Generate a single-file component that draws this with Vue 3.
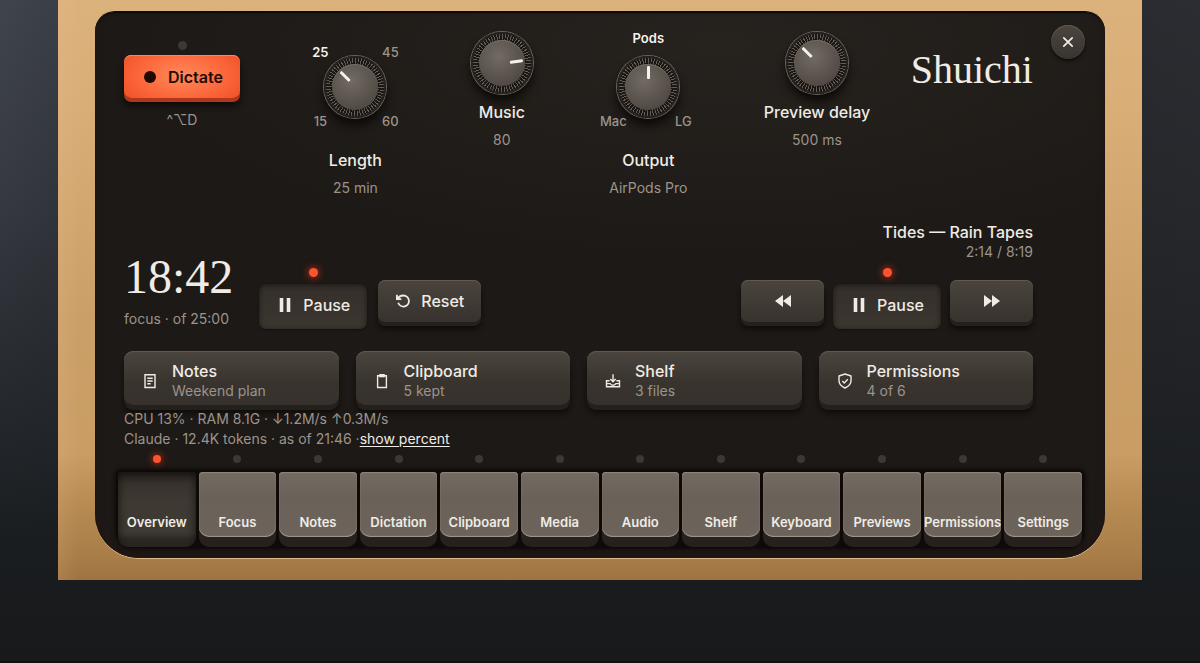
<script setup>
import { ref } from 'vue'

const dials = [
  { id: 'length', label: 'Length', value: '25 min', angle: -45, pos: 33, marks: [
    { text: '25', x: -35, y: -35, on: true }, { text: '45', x: 35, y: -35 },
    { text: '15', x: -35, y: 34 }, { text: '60', x: 35, y: 34 } ] },
  { id: 'music', label: 'Music', value: '80', angle: 82, pos: 80 },
  { id: 'output', label: 'Output', value: 'AirPods Pro', angle: 0, pos: 50, marks: [
    { text: 'Pods', x: 0, y: -49, on: true },
    { text: 'Mac', x: -35, y: 34 }, { text: 'LG', x: 35, y: 34 } ] },
  { id: 'delay', label: 'Preview delay', value: '500 ms', angle: -45, pos: 33 }
]

const cards = [
  { icon: 'notes', title: 'Notes', sub: 'Weekend plan' },
  { icon: 'clipboard', title: 'Clipboard', sub: '5 kept' },
  { icon: 'shelf', title: 'Shelf', sub: '3 files' },
  { icon: 'shield', title: 'Permissions', sub: '4 of 6' }
]

const tabs = ['Overview', 'Focus', 'Notes', 'Dictation', 'Clipboard', 'Media', 'Audio', 'Shelf', 'Keyboard', 'Previews', 'Permissions', 'Settings']
const active = ref('Overview')
</script>

<template>
  <div class="desk">
    <div class="wood">
      <main class="panel">
        <button class="close" type="button" aria-label="Close">
          <svg viewBox="0 0 12 12" width="12" height="12"><path d="M1.800 1.800 10.200 10.200M10.200 1.800 1.800 10.200" fill="none" stroke="#f3eee8" stroke-width="1.7" stroke-linecap="round" /></svg>
        </button>

        <div class="content">
          <header class="top">
            <div class="dictate-col">
              <button class="dictate" type="button">
                <i class="lamp"></i>
                <i class="rec"></i>Dictate
              </button>
              <span class="muted">^⌥D</span>
            </div>

            <div v-for="d in dials" :key="d.id" class="dial" :class="{ marked: d.marks }">
              <div class="dial-face">
                <div class="knob">
                  <input :id="d.id" type="range" min="0" max="100" :value="d.pos" />
                  <i class="needle" :style="{ transform: `rotate(${d.angle}deg)` }"></i>
                </div>
                <span
                  v-for="m in d.marks" :key="m.text" class="mark" :class="{ on: m.on }"
                  :style="{ transform: `translate(calc(-50% + ${m.x}px), calc(-50% + ${m.y}px))` }"
                >{{ m.text }}</span>
              </div>
              <label class="label" :for="d.id">{{ d.label }}</label>
              <span class="muted">{{ d.value }}</span>
            </div>

            <h1 class="brand">Shuichi</h1>
          </header>

          <section class="players">
            <div class="timer">
              <div class="clock">
                <span class="time">18:42</span>
                <span class="muted">focus · of 25:00</span>
              </div>
              <div class="row timer-row">
                <button class="btn pressed" type="button">
                  <i class="lamp lit"></i>
                  <svg viewBox="0 0 12 14" width="12" height="14"><path d="M1 0h3v14H1zM8 0h3v14H8z" fill="#f0ebe5" stroke="#f0ebe5" stroke-width=".6" /></svg>Pause
                </button>
                <button class="btn reset" type="button">
                  <svg viewBox="0 0 16 16" width="16" height="16"><path d="M1.900 1.800V6.200H6.300M2.500 5.900 C3.600 3.700 5.800 2.500 8.400 2.500 A5.500 5.500 0 1 1 3.200 9.800" fill="none" stroke="#f0ebe5" stroke-width="1.8" /></svg>Reset
                </button>
              </div>
            </div>

            <div class="media">
              <div class="track">
                <span class="label">Tides — Rain Tapes</span>
                <span class="muted">2:14 / 8:19</span>
              </div>
              <div class="row">
                <button class="btn skip" type="button" aria-label="Previous">
                  <svg viewBox="0 0 16 12" width="16" height="12"><path d="M8 0v12L0 6zM16 0v12L8 6z" fill="#f0ebe5" /></svg>
                </button>
                <button class="btn pressed" type="button">
                  <i class="lamp lit"></i>
                  <svg viewBox="0 0 12 14" width="12" height="14"><path d="M1 0h3v14H1zM8 0h3v14H8z" fill="#f0ebe5" stroke="#f0ebe5" stroke-width=".6" /></svg>Pause
                </button>
                <button class="btn skip" type="button" aria-label="Next">
                  <svg viewBox="0 0 16 12" width="16" height="12"><path d="M0 0v12l8-6zM8 0v12l8-6z" fill="#f0ebe5" /></svg>
                </button>
              </div>
            </div>
          </section>

          <section class="cards">
            <button v-for="c in cards" :key="c.icon" class="card" type="button">
              <svg viewBox="0 0 16 16" width="16" height="16" fill="none" stroke="#f0ebe5" stroke-width="1.4">
                <template v-if="c.icon === 'notes'">
                  <path d="M3 1.700h10v12.800H3z" /><path d="M5.300 5.200h5.400M5.300 8h5.400M5.300 10.800h3.400" />
                </template>
                <template v-else-if="c.icon === 'clipboard'">
                  <path d="M3.600 2.800h8.800v11.700H3.600z" /><path d="M5.200 1h5.600v3.300H5.200z" fill="#f0ebe5" stroke="none" />
                </template>
                <template v-else-if="c.icon === 'shelf'">
                  <path d="M8 1.200v7.200M5.300 6 8 8.700 10.700 6M4.600 7.800H1.500v6h13v-6h-3.100M1.500 10.600h3.600c.5 1.200 1.500 1.700 2.900 1.700s2.400-.5 2.900-1.700h3.600" />
                </template>
                <template v-else>
                  <path d="M8 1 14 3v4.800c0 3.200-2.300 5.600-6 7.200-3.700-1.600-6-4-6-7.200V3z" stroke-linejoin="round" /><path d="m5.300 8 2 2 3.500-3.700" />
                </template>
              </svg>
              <span class="card-text">
                <span class="label">{{ c.title }}</span>
                <span class="muted">{{ c.sub }}</span>
              </span>
            </button>
          </section>

          <footer class="status">
            <span>CPU 13% · RAM 8.1G · ↓1.2M/s ↑0.3M/s</span>
            <span>Claude · 12.4K tokens · as of 21:46 ·<a href="#percent">show percent</a></span>
          </footer>
        </div>

        <nav class="keybed" aria-label="Sections">
          <button v-for="t in tabs" :key="t" class="key" :class="{ down: t === active }" type="button" @click="active = t">
            <i class="lamp small" :class="{ lit: t === active }"></i>
            <span class="cap">{{ t }}</span>
          </button>
        </nav>
      </main>
    </div>
  </div>
</template>

<style>
body { background: #17191b; }
</style>

<style scoped>
.desk {
  box-sizing: border-box;
  min-height: 100vh;
  padding: 0 58px;
  border-bottom: 2px solid #150e0f;
  background:
    linear-gradient(180deg, transparent 0%, rgba(23, 25, 27, 0.25) 30%, #1a1d20 82%, #18191b 100%),
    linear-gradient(90deg, #40444d 0%, #363a42 8%, #2a2b30 92%, #2c2d32 100%);
  font-family: Inter, "Liberation Sans", sans-serif;
  font-size: 16px;
  line-height: 20px;
  color: #f0ebe5;
}
button {
  border: 0;
  margin: 0;
  padding: 0;
  font: inherit;
  color: inherit;
  cursor: pointer;
}
.wood {
  padding: 12px 37px 22px;
  background:
    linear-gradient(90deg, rgba(240, 190, 160, 0.15) 0, transparent 20px),
    linear-gradient(180deg, #dcb27c 0%, #d9ae77 18%, #cba068 55%, #c99d64 78%, #b98d54 86%, #a87d48 96%, #a07340 100%);
}
.panel {
  position: relative;
  padding: 20px 0 10px;
  border-radius: 20px 20px 44px 44px;
  background: radial-gradient(ellipse 60% 40% at 62% 6%, #26221e 0%, #1d1916 100%);
  box-shadow: 0 1px 0 #dcbd8a, inset 0 1px 1px #0b0806, 0 -1px 0 #120b06, inset 0 -5px 8px #211614;
}
.close {
  position: absolute;
  top: 13px;
  right: 20px;
  display: grid;
  place-items: center;
  width: 34px;
  height: 34px;
  border-radius: 50%;
  background: linear-gradient(#4c463f, #39342f);
  box-shadow: 0 2px 3px #0d0a08, inset 0 1px 0 #625b53;
}
.content { padding: 0 72px 0 29px; }
.label { font-size: 16px; font-weight: 500; color: #f0ebe5; }
.muted { font-size: 14px; color: #9b948c; }

.top { display: flex; justify-content: space-between; align-items: flex-start; }
.dictate-col {
  display: flex;
  flex-direction: column;
  align-items: center;
  gap: 12px;
  padding-top: 23px;
}
.dictate {
  position: relative;
  display: flex;
  align-items: center;
  gap: 12px;
  height: 43px;
  padding: 0 17px 0 20px;
  border-radius: 7px;
  background: radial-gradient(ellipse 65% 90% at 50% 48%, #ff8a5c 0%, #fb6539 60%, #ee4f25 100%);
  box-shadow: 0 4px 0 #b0371a, 0 8px 6px #0d0a08, inset 0 1px 0 #ff8560;
  font-weight: 600;
  color: #240a04;
}
.rec { width: 12px; height: 12px; border-radius: 50%; background: #200803; }
.lamp {
  position: absolute;
  left: 50%;
  top: -14px;
  width: 9px;
  height: 9px;
  margin-left: -4px;
  border-radius: 50%;
  background: #3c3834;
}
.lamp.lit { background: #ff5330; box-shadow: 0 0 7px 1px #a72c14; }

.dial { display: flex; flex-direction: column; align-items: center; gap: 8px; min-width: 62px; }
.dial.marked { width: 150px; }
.dial-face { position: relative; display: grid; place-items: center; }
.marked .dial-face { height: 110px; width: 100%; }
.knob {
  position: relative;
  width: 62px;
  height: 62px;
  border-radius: 50%;
  background: repeating-conic-gradient(#665f57 0 2deg, #1b1714 2deg 6deg);
  box-shadow: 0 0 0 1px #6b655e, inset 0 0 0 2px #26221e, 0 7px 10px #0c0907;
}
.knob input {
  position: absolute;
  inset: 8px;
  width: 46px;
  height: 46px;
  margin: 0;
  border-radius: 50%;
  appearance: none;
  background: radial-gradient(circle at 42% 35%, #726b63, #514a44 75%, #48423c);
  box-shadow: inset 0 1px 0 #746d65, 0 0 2px #0f0c0a;
}
.knob input::-webkit-slider-thumb { appearance: none; width: 1px; height: 1px; }
.needle { position: absolute; inset: 0; pointer-events: none; }
.needle::before {
  content: "";
  display: block;
  width: 3px;
  height: 13px;
  margin: 10px auto 0;
  border-radius: 1px;
  background: #f6f1eb;
}
.mark { position: absolute; left: 50%; top: 50%; font-size: 13px; font-weight: 500; color: #9b948c; }
.mark.on { font-weight: 600; color: #f6f1eb; }
.brand {
  margin: 14px 0 0;
  font-family: "Liberation Serif", serif;
  font-size: 40px;
  line-height: 48px;
  font-weight: 400;
}

.players { display: flex; justify-content: space-between; align-items: flex-end; margin-top: 24px; }
.timer { display: flex; align-items: flex-end; gap: 26px; }
.clock { display: flex; flex-direction: column; gap: 8px; }
.time { font-family: "Liberation Serif", serif; font-size: 48px; line-height: 48px; }
.row { display: flex; gap: 9px; padding-bottom: 7px; }
.timer-row { gap: 11px; }
.btn {
  position: relative;
  display: flex;
  align-items: center;
  justify-content: center;
  gap: 12px;
  height: 42px;
  padding: 0 17px 0 20px;
  border-radius: 7px;
  background: linear-gradient(#4a443d, #37322d);
  box-shadow: 0 4px 0 #24201c, 0 7px 5px #0e0b09, inset 0 1px 0 #615a52;
  font-weight: 500;
}
.btn .lamp { top: -16px; }
.btn.reset { gap: 10px; padding: 0 17px; }
.btn.pressed {
  height: 45px;
  padding-bottom: 3px;
  box-sizing: border-box;
  margin: 4px 0 -7px;
  background: linear-gradient(#342f2a, #3b3630);
  box-shadow: inset 0 1px 5px #1b1714, 0 1px 2px #12100e;
}
.btn.skip { width: 83px; padding: 0; }
.media { display: flex; flex-direction: column; gap: 18px; }
.track { display: flex; flex-direction: column; align-items: flex-end; }

.cards { display: grid; grid-template-columns: repeat(4, 1fr); gap: 17px; margin-top: 22px; }
.card {
  display: flex;
  align-items: center;
  gap: 14px;
  height: 54px;
  padding: 6px 18px 0;
  border-radius: 9px;
  background: linear-gradient(#4b453e, #38332d 60%, #36312c);
  box-shadow: 0 5px 0 #24201c, 0 8px 5px #0f0c0a, inset 0 1px 0 #5f5850;
  text-align: left;
}
.card-text { display: flex; flex-direction: column; }
.status {
  position: relative;
  display: flex;
  flex-direction: column;
  margin-top: 4px;
  font-size: 14px;
  color: #9b948c;
}
.status a { color: #f0ebe5; text-underline-offset: 2px; }

.keybed {
  display: grid;
  grid-template-columns: repeat(12, minmax(0, 1fr));
  gap: 3px;
  margin: 21px 21px 0;
  padding: 2px 2px 1px;
  border-radius: 5px 5px 16px 16px;
  background: #0e0a08;
  box-shadow: 0 0 4px 1px #0e0a08;
}
.key {
  position: relative;
  display: flex;
  height: 75px;
  padding-bottom: 10px;
  border-radius: 4px 4px 10px 10px;
  background: #26211c;
}
.lamp.small { width: 8px; height: 8px; top: -17px; }
.cap {
  flex: 1;
  display: flex;
  align-items: flex-end;
  justify-content: center;
  box-sizing: border-box;
  height: 65px;
  padding-bottom: 5px;
  border-radius: 4px 4px 10px 10px;
  background: linear-gradient(#736b62, #6a6259 40%, #6c645b);
  box-shadow: inset 0 1px 1px #90887e, inset 0 -1px 1px #a29a8f;
  font-size: 13px;
  font-weight: 600;
}
.key.down { background: linear-gradient(#332e29, #3e3933 40%, #3e3933 80%, #2b2722 90%); box-shadow: inset 0 4px 8px #15110e; }
.key.down .cap { background: none; box-shadow: none; }
</style>
